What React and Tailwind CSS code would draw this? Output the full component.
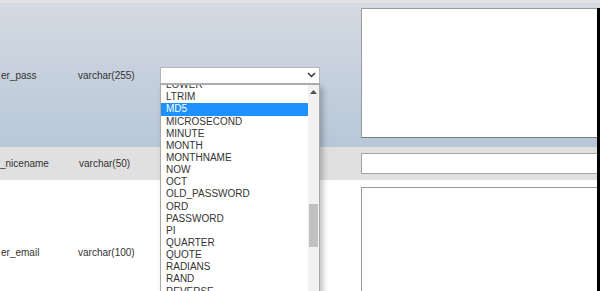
const OPTIONS = [
  "LOWER",
  "LTRIM",
  "MD5",
  "MICROSECOND",
  "MINUTE",
  "MONTH",
  "MONTHNAME",
  "NOW",
  "OCT",
  "OLD_PASSWORD",
  "ORD",
  "PASSWORD",
  "PI",
  "QUARTER",
  "QUOTE",
  "RADIANS",
  "RAND",
  "REVERSE",
  "RIGHT",
];

function Listbox() {
  return (
    <div className="absolute left-0 top-[17px] z-20 flex h-[220px] w-[160px] overflow-hidden border border-[#a9a9a9] bg-white shadow-[3px_3px_6px_rgba(0,0,0,0.25)]">
      <div className="min-w-0 flex-1">
        <div className="mt-[-5.4px]">
          {OPTIONS.map((o) => (
            <div
              key={o}
              className={`h-[12.15px] pl-[5px] text-[10px] leading-[12.15px] ${
                o === "MD5" ? "bg-[#1e90ff] text-white" : "text-[#333]"
              }`}
            >
              {o}
            </div>
          ))}
        </div>
      </div>
      {/* scrollbar */}
      <div className="flex w-[11px] flex-col items-center bg-[#f1f1f1]">
        <svg width="7" height="4" viewBox="0 0 7 4" className="mt-[5px]">
          <polygon points="3.5,0 7,4 0,4" fill="#505050" />
        </svg>
        <div className="mt-[110px] h-[43px] w-[9px] bg-[#c1c1c1]" />
      </div>
    </div>
  );
}

function Textarea({ className }) {
  return (
    <div
      className={`border border-[#9a9a9a] border-b-[#7a7a7a] bg-white ${className}`}
    />
  );
}

export default function App() {
  return (
    <div
      className="relative h-[291px] w-[600px] overflow-hidden bg-white text-[10px] text-[#333]"
      style={{ fontFamily: '"Liberation Sans", Arial, sans-serif' }}
    >
      <div className="h-[3px] bg-[#e2e2e2]" />

      {/* user_pass */}
      <div className="flex h-[144px] items-center bg-gradient-to-b from-[#d4dae2] to-[#b8c7d8]">
        <div className="w-[78px] pl-[1px]">er_pass</div>
        <div className="w-[82px]">varchar(255)</div>
        <div className="relative w-[160px]">
          <div className="flex h-[17px] items-center justify-end border border-[#b5b5b5] bg-white pr-[3px]">
            <svg width="9" height="6" viewBox="0 0 9 6">
              <polyline
                points="1,1 4.5,4.5 8,1"
                fill="none"
                stroke="#333"
                strokeWidth="1.5"
              />
            </svg>
          </div>
          <Listbox />
        </div>
        <div className="w-[41px]" />
        <Textarea className="mt-[5px] h-[130px] flex-1 self-start" />
      </div>

      {/* user_nicename */}
      <div className="flex h-[33px] items-center bg-[#e0e0e0]">
        <div className="w-[79px]">_nicename</div>
        <div className="w-[282px]">varchar(50)</div>
        <div className="h-[21px] flex-1 border border-[#a5a5a5] bg-white" />
      </div>

      {/* user_email */}
      <div className="flex h-[144px] items-center">
        <div className="w-[78px] pl-[1px]">er_email</div>
        <div className="w-[283px]">varchar(100)</div>
        <Textarea className="mt-[7px] h-[130px] flex-1 self-start" />
      </div>

      <div className="absolute bottom-0 right-0 top-[8px] w-[3px] bg-black" />
    </div>
  );
}
